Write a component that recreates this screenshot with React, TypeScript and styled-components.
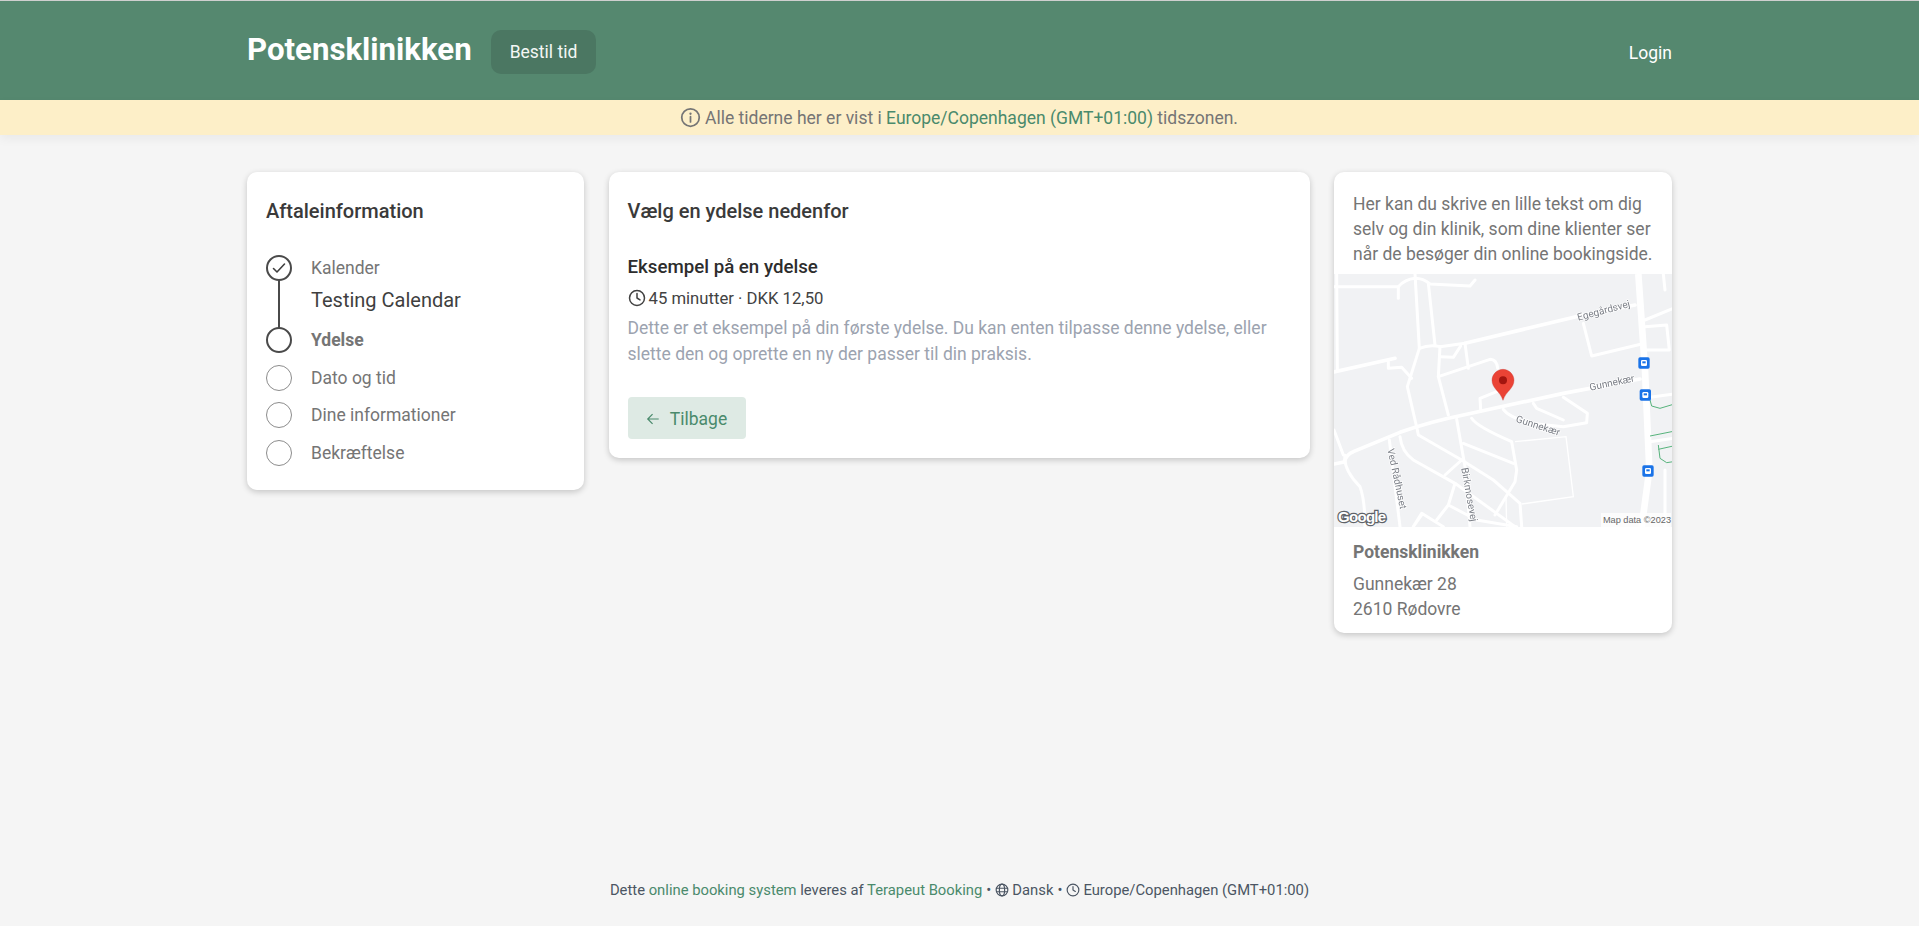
import React from "react";
import styled, { createGlobalStyle } from "styled-components";

const Global = createGlobalStyle`
  html, body { margin: 0; padding: 0; height: 100%; }
  body { background: #f5f5f5; font-family: Roboto, "Liberation Sans", sans-serif; color: #757575; }
  #root { min-height: 100%; }
  a { color: inherit; text-decoration: none; }
`;

const Page = styled.div`
  height: 926px;
  display: flex;
  flex-direction: column;
  overflow: hidden;
`;
const Header = styled.header`
  height: 100px;
  box-sizing: border-box;
  background: #55886f;
  border-top: 1px solid #cfcfcf;
  display: flex;
  justify-content: center;
  flex: none;
`;
const HeaderInner = styled.div`
  width: 1425px;
  display: flex;
  align-items: center;
`;
const Brand = styled.h1`
  margin: 0 19px 2px 0;
  font-size: 31.2px;
  line-height: 44px;
  font-weight: 700;
  color: #fff;
`;
const NavButton = styled.a`
  height: 44px;
  margin-top: 2px;
  padding: 0 19px;
  display: flex;
  align-items: center;
  border-radius: 10px;
  background: #4b7762;
  color: #f4f7f5;
  font-size: 17.5px;
`;
const Login = styled.a`
  margin-left: auto;
  margin-top: 4px;
  color: #fff;
  font-size: 17.5px;
`;
const Banner = styled.div`
  height: 35px;
  flex: none;
  background: #fdefc8;
  box-shadow: 0 4px 10px rgba(0, 0, 0, 0.05);
  display: flex;
  align-items: center;
  justify-content: center;
  gap: 4px;
  font-size: 17.5px;
  color: #757575;
  padding-right: 1px;
`;
const Accent = styled.a`
  color: #4a8a6c;
`;
const Main = styled.main`
  flex: 1;
  display: flex;
  justify-content: center;
  padding-top: 37px;
`;
const Columns = styled.div`
  width: 1425px;
  display: grid;
  grid-template-columns: 337px 701px 338px;
  column-gap: 24.5px;
  align-items: start;
`;
const Card = styled.section`
  background: #fff;
  border-radius: 10px;
  box-shadow: 0 2px 6px rgba(0, 0, 0, 0.2);
  overflow: hidden;
`;
const InfoCard = styled(Card)`
  height: 318px;
  box-sizing: border-box;
  padding: 24px 19px 0;
`;
const ServiceCard = styled(Card)`
  height: 286px;
  box-sizing: border-box;
  padding: 24px 19px 0;
`;
const CardTitle = styled.h2`
  margin: 0;
  font-size: 20px;
  line-height: 30px;
  font-weight: 500;
  color: #3a3a3a;
`;
const Steps = styled.ol`
  list-style: none;
  margin: 29px 0 0;
  padding: 0;
  display: flex;
  flex-direction: column;
`;
const Step = styled.li<{ $h: number }>`
  display: grid;
  grid-template-columns: 26px 1fr;
  column-gap: 19px;
  height: ${(p) => p.$h}px;
  position: relative;
`;
const Dot = styled.span<{ $on?: boolean }>`
  width: 26px;
  height: 26px;
  box-sizing: border-box;
  border-radius: 50%;
  border: ${(p) => (p.$on ? "2px solid #4a4a4a" : "1.5px solid #8c8c8c")};
  display: flex;
  align-items: center;
  justify-content: center;
  background: #fff;
  position: relative;
  z-index: 1;
`;
const Connector = styled.span`
  position: absolute;
  left: 12px;
  top: 25px;
  width: 2px;
  height: 48px;
  background: #4a4a4a;
`;
const StepBody = styled.div`
  display: flex;
  flex-direction: column;
`;
const StepLabel = styled.span<{ $bold?: boolean }>`
  font-size: 17.5px;
  line-height: 26px;
  font-weight: ${(p) => (p.$bold ? 700 : 400)};
  color: #757575;
`;
const StepValue = styled.span`
  margin-top: 5px;
  font-size: 20px;
  line-height: 28px;
  color: #3f3f3f;
`;
const ServiceName = styled.h3`
  margin: 28px 0 0;
  font-size: 18.7px;
  line-height: 26px;
  font-weight: 500;
  color: #2d2d2d;
`;
const Meta = styled.div`
  margin-top: 4px;
  height: 28px;
  display: flex;
  align-items: center;
  gap: 3px;
  font-size: 16.7px;
  color: #424242;
`;
const Desc = styled.p`
  margin: 4px 0 0;
  font-size: 17.5px;
  line-height: 25.5px;
  color: #9ca3af;
`;
const BackButton = styled.a`
  margin-top: 30px;
  width: 118px;
  height: 42px;
  border-radius: 4px;
  background: #deeae4;
  color: #4a8a6c;
  font-size: 17.5px;
  display: flex;
  align-items: center;
  justify-content: center;
  gap: 10px;
  padding: 2px 0 0 0;
  box-sizing: border-box;
`;
const LocationCard = styled(Card)`
  height: 461px;
`;
const Intro = styled.p`
  margin: 0;
  padding: 20px 19px 0;
  height: 102px;
  box-sizing: border-box;
  font-size: 17.5px;
  line-height: 25px;
  color: #757575;
`;
const MapFrame = styled.div`
  height: 253px;
  position: relative;
  background: #f1f2f4;
  overflow: hidden;
`;
const MapSvg = styled.svg`
  display: block;
  filter: blur(0.4px);
`;
const Address = styled.div`
  padding: 13px 19px 0;
  font-size: 17.5px;
  line-height: 25px;
  color: #757575;
`;
const AddressName = styled.div`
  font-weight: 700;
  margin-bottom: 7px;
`;
const Footer = styled.footer`
  flex: none;
  height: 46px;
  display: flex;
  justify-content: center;
  gap: 4px;
  font-size: 14.8px;
  line-height: 20px;
  color: #4b5563;
  align-items: flex-start;
`;
const FooterItem = styled.span`
  display: inline-flex;
  align-items: center;
  gap: 3px;
`;

const Info = () => (
  <svg width="21" height="21" viewBox="0 0 24 24" fill="none" stroke="#757575" strokeWidth="2" strokeLinecap="round">
    <circle cx="12" cy="12" r="10" />
    <path d="M12 11v6" />
    <path d="M12 7.5v.2" strokeWidth="2.6" />
  </svg>
);
const Check = () => (
  <svg width="16" height="16" viewBox="0 0 16 16" fill="none" stroke="#3f3f3f" strokeWidth="1.6" strokeLinecap="round" strokeLinejoin="round">
    <path d="M2.5 8.5l3.5 3.5 7.5-8" />
  </svg>
);
const Clock = ({ size, color }: { size: number; color: string }) => (
  <svg width={size} height={size} viewBox="0 0 24 24" fill="none" stroke={color} strokeWidth="2" strokeLinecap="round" strokeLinejoin="round">
    <circle cx="12" cy="12" r="10" />
    <path d="M12 6v6l4 2.5" />
  </svg>
);
const Globe = () => (
  <svg width="14" height="14" viewBox="0 0 24 24" fill="none" stroke="#4b5563" strokeWidth="2">
    <circle cx="12" cy="12" r="10" />
    <ellipse cx="12" cy="12" rx="4.5" ry="10" />
    <path d="M2.5 9h19M2.5 15h19" />
  </svg>
);
const ArrowLeft = () => (
  <svg width="14" height="14" viewBox="0 0 16 16" fill="none" stroke="#4a8a6c" strokeWidth="1.4">
    <path d="M14.5 8H2M7.5 2.5L2 8l5.5 5.5" />
  </svg>
);

const mainRoads = [
  "M12 582L42 576Q50 552 70 545L210 487Q300 455 400 435L700 370L930 327",
  "M12 306L195 265",
  "M405 220L760 135L915 105",
];
const roads = [
  "M12 50L205 50Q225 28 255 25Q280 25 300 42L420 48L435 30",
  "M205 50L205 85",
  "M255 12L268 235",
  "M295 40L315 225",
  "M268 235L232 350L262 480L265 495L395 570",
  "M268 235Q300 222 330 230L405 220L415 295",
  "M330 230L325 320L355 435",
  "M325 320L480 268Q500 268 503 295",
  "M330 260L370 262L392 228",
  "M175 275L175 295L215 292L245 325",
  "M500 365L450 385L452 418",
  "M380 448L405 590L420 770",
  "M425 445Q440 470 545 515L560 600L555 635L495 735",
  "M520 418Q535 440 600 460L700 470L770 458L772 430L700 382",
  "M610 400L620 415L700 450",
  "M400 520L550 580",
  "M210 500Q215 545 250 570L375 640L555 770",
  "M395 570L345 615",
  "M375 640L355 705L320 750",
  "M355 705L440 750L560 770",
  "M275 735L250 770L275 730L340 770",
  "M45 556Q40 600 90 650Q105 690 105 770",
  "M178 510L210 770",
  "M12 480L40 555",
  "M20 12L22 300",
  "M395 570L490 630L570 700L575 770",
  "M760 160L785 258L935 222",
  "M945 170L1010 165L1018 240L945 240",
  "M945 150L1030 115",
  "M960 382L1030 372",
  "M960 515L1030 505",
  "M1005 600L1005 770",
  "M1000 12L1005 60",
];
const thinRoads = ["M555 515L708 500L730 680L575 702", "M495 735L528 680L530 770"];
const greens = [
  "M960 390L965 408L990 415L1030 403",
  "M960 498L1030 484",
  "M985 525L990 565L1010 578L1030 575",
  "M985 538L1030 528",
];
const stops = [[942, 279], [946, 375], [954, 603]];

const MapLabel = styled.text`
  font-family: Roboto, "Liberation Sans", sans-serif;
  font-size: 30px;
  fill: #7b7f87;
  stroke: #fff;
  stroke-width: 4px;
  paint-order: stroke;
`;
const Attribution = styled.span`
  position: absolute;
  right: 1px;
  bottom: 0;
  padding: 1px 0 1px 2px;
  background: rgba(255, 255, 255, 0.75);
  font-family: "Liberation Sans", Arial, sans-serif;
  font-size: 9.2px;
  line-height: 12px;
  color: #666;
`;
const MapLogo = styled.span`
  position: absolute;
  left: 4px;
  bottom: 1px;
  font-family: "Liberation Sans", Arial, sans-serif;
  font-size: 15px;
  line-height: 18px;
  font-weight: 700;
  letter-spacing: -0.7px;
  color: #fff;
  -webkit-text-stroke: 2.5px #5f6368;
  paint-order: stroke fill;
`;

const MapArt = () => (
  <MapFrame>
    <MapSvg width="338" height="253" viewBox="12 12 1014 759" fill="none">
      <rect x="12" y="12" width="1014" height="759" fill="#f1f2f4" />
      {thinRoads.map((d) => <path key={d} d={d} stroke="#fff" strokeWidth="4" />)}
      {roads.map((d) => <path key={d} d={d} stroke="#fff" strokeWidth="9" strokeLinecap="round" strokeLinejoin="round" />)}
      {mainRoads.map((d) => <path key={d} d={d} stroke="#fff" strokeWidth="11" strokeLinecap="round" strokeLinejoin="round" />)}
      <path d="M925 12L945 300L958 600L935 771" stroke="#fff" strokeWidth="20" />
      {greens.map((d) => <path key={d} d={d} stroke="#57b37c" strokeWidth="3" />)}
      {stops.map(([x, y]) => (
        <g key={x}>
          <rect x={x - 17} y={y - 17} width="34" height="34" rx="5" fill="#1a73e8" />
          <rect x={x - 9} y={y - 9} width="18" height="18" rx="4" fill="#fff" />
          <rect x={x - 5} y={y - 5} width="10" height="6" fill="#1a73e8" />
        </g>
      ))}
      <MapLabel transform="translate(745 152) rotate(-15)">Egegårdsvej</MapLabel>
      <MapLabel transform="translate(781 362) rotate(-12)">Gunnekær</MapLabel>
      <MapLabel transform="translate(556 455) rotate(18)">Gunnekær</MapLabel>
      <MapLabel transform="translate(172 538) rotate(78)">Ved Rådhuset</MapLabel>
      <MapLabel transform="translate(394 595) rotate(80)">Birkmosevej</MapLabel>
      <path d="M519 298c-18 0-33 15-33 33 0 25 24 32 33 60 9-28 33-35 33-60 0-18-15-33-33-33z" fill="#ea4335" stroke="#c5322a" strokeWidth="1" />
      <circle cx="519" cy="331" r="12" fill="#a3150f" />
    </MapSvg>
    <MapLogo>Google</MapLogo>
    <Attribution>Map data ©2023</Attribution>
  </MapFrame>
);

export default function App() {
  return (
    <Page>
      <Global />
      <Header>
        <HeaderInner>
          <Brand>Potensklinikken</Brand>
          <NavButton>Bestil tid</NavButton>
          <Login>Login</Login>
        </HeaderInner>
      </Header>
      <Banner>
        <Info />
        <span>
          Alle tiderne her er vist i <Accent>Europe/Copenhagen (GMT+01:00)</Accent> tidszonen.
        </span>
      </Banner>
      <Main>
        <Columns>
          <InfoCard>
            <CardTitle>Aftaleinformation</CardTitle>
            <Steps>
              <Step $h={72}>
                <Dot $on><Check /></Dot>
                <Connector />
                <StepBody>
                  <StepLabel>Kalender</StepLabel>
                  <StepValue>Testing Calendar</StepValue>
                </StepBody>
              </Step>
              <Step $h={38}>
                <Dot $on />
                <StepLabel $bold>Ydelse</StepLabel>
              </Step>
              <Step $h={37}>
                <Dot />
                <StepLabel>Dato og tid</StepLabel>
              </Step>
              <Step $h={38}>
                <Dot />
                <StepLabel>Dine informationer</StepLabel>
              </Step>
              <Step $h={26}>
                <Dot />
                <StepLabel>Bekræftelse</StepLabel>
              </Step>
            </Steps>
          </InfoCard>
          <ServiceCard>
            <CardTitle>Vælg en ydelse nedenfor</CardTitle>
            <ServiceName>Eksempel på en ydelse</ServiceName>
            <Meta>
              <Clock size={18} color="#424242" />
              <span>45 minutter · DKK 12,50</span>
            </Meta>
            <Desc>
              Dette er et eksempel på din første ydelse. Du kan enten tilpasse denne ydelse, eller slette den og oprette en ny der passer til din praksis.
            </Desc>
            <BackButton>
              <ArrowLeft />
              Tilbage
            </BackButton>
          </ServiceCard>
          <LocationCard>
            <Intro>Her kan du skrive en lille tekst om dig selv og din klinik, som dine klienter ser når de besøger din online bookingside.</Intro>
            <MapArt />
            <Address>
              <AddressName>Potensklinikken</AddressName>
              <div>Gunnekær 28</div>
              <div>2610 Rødovre</div>
            </Address>
          </LocationCard>
        </Columns>
      </Main>
      <Footer>
        <span>
          Dette <Accent>online booking system</Accent> leveres af <Accent>Terapeut Booking</Accent>
        </span>
        <span>•</span>
        <FooterItem><Globe /> Dansk</FooterItem>
        <span>•</span>
        <FooterItem><Clock size={14} color="#4b5563" /> Europe/Copenhagen (GMT+01:00)</FooterItem>
      </Footer>
    </Page>
  );
}
